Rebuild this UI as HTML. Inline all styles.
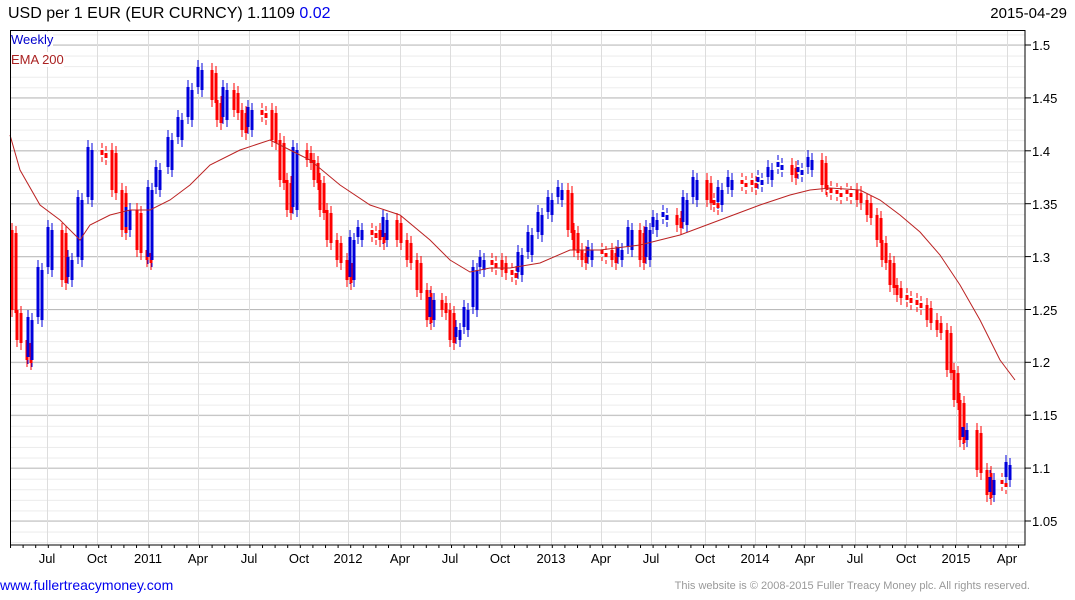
<!DOCTYPE html><html><head><style>
body{margin:0;background:#fff;width:1075px;height:600px;overflow:hidden;font-family:"Liberation Sans",sans-serif;position:relative}
.t{position:absolute;white-space:nowrap}
</style></head><body>
<svg width="1075" height="600" style="position:absolute;left:0;top:0" font-family="Liberation Sans" font-size="13">
<defs>
<pattern id="mn" patternUnits="userSpaceOnUse" x="0" y="45" width="1075" height="10.578"><line x1="0" x2="1075" y1="0.5" y2="0.5" stroke="#ebebeb"/></pattern>
<pattern id="mt" patternUnits="userSpaceOnUse" x="0" y="45" width="10" height="10.578"><line x1="0" x2="3" y1="0.5" y2="0.5" stroke="#000"/></pattern>
<pattern id="bt" patternUnits="userSpaceOnUse" x="10" y="0" width="12.6" height="10"><line x1="0.5" x2="0.5" y1="0" y2="10" stroke="#000"/></pattern>
<path id="rd" fill="none" d="M12 230V310M17 310V340M27 340V360M62 230V280M102 150V155M112 150V190M122 190V230M137 210V250M147 250V260M212 70V100M217 100V120M234 90V110M242 110V130M262 110V115M272 110V140M280 140V180M287 180V210M307 150V160M314 160V180M320 180V210M327 210V240M337 240V260M347 260V280M372 230V235M380 230V240M397 220V240M407 240V260M417 260V290M427 290V320M442 300V310M450 310V340M492 260V265M502 260V270M512 270V275M568 190V230M574 230V250M582 250V260M602 250V254M612 250V260M640 230V260M677 215V225M707 180V200M714 200V205M742 180V184M752 180V185M792 165V175M822 160V185M827 185V190M837 190V194M847 190V194M857 190V200M867 200V215M877 215V240M882 240V260M890 260V285M897 285V295M907 295V300M917 300V305M927 305V320M937 320V330M947 330V370M954 370V400M960 400V440M977 430V470M987 470V495M1002 480V484"/>
<path id="bl" fill="none" d="M32 320V360M42 270V320M52 230V270M72 260V280M82 200V260M92 150V200M130 210V230M152 190V260M160 170V190M172 140V170M182 120V140M192 90V120M202 70V90M227 90V120M252 110V130M297 150V210M354 240V280M362 230V240M387 220V240M434 300V320M460 330V340M468 310V330M477 270V310M484 260V270M522 255V275M532 235V255M542 215V235M552 200V215M562 190V200M592 250V260M622 250V260M632 230V250M650 230V260M657 220V230M667 215V220M687 200V225M697 180V200M722 190V205M732 180V190M762 180V185M772 170V180M782 165V170M802 170V175M812 160V170M967 430V440M994 480V495M1010 465V480"/>
</defs>
<rect x="10" y="30" width="1015" height="515" fill="url(#mn)"/>
<rect x="1025" y="30" width="3" height="515" fill="url(#mt)"/>
<rect x="10" y="545" width="1015" height="3" fill="url(#bt)"/>
<g stroke="#bbb">
<line x1="10" x2="1025" y1="45" y2="45"/><line x1="10" x2="1025" y1="97.9" y2="97.9"/><line x1="10" x2="1025" y1="150.8" y2="150.8"/><line x1="10" x2="1025" y1="203.7" y2="203.7"/><line x1="10" x2="1025" y1="256.6" y2="256.6"/><line x1="10" x2="1025" y1="309.5" y2="309.5"/><line x1="10" x2="1025" y1="362.3" y2="362.3"/><line x1="10" x2="1025" y1="415.2" y2="415.2"/><line x1="10" x2="1025" y1="468.1" y2="468.1"/><line x1="10" x2="1025" y1="521" y2="521"/>
</g>
<g stroke="#000">
<line x1="1025" x2="1031" y1="45" y2="45"/><line x1="1025" x2="1031" y1="97.9" y2="97.9"/><line x1="1025" x2="1031" y1="150.8" y2="150.8"/><line x1="1025" x2="1031" y1="203.7" y2="203.7"/><line x1="1025" x2="1031" y1="256.6" y2="256.6"/><line x1="1025" x2="1031" y1="309.5" y2="309.5"/><line x1="1025" x2="1031" y1="362.3" y2="362.3"/><line x1="1025" x2="1031" y1="415.2" y2="415.2"/><line x1="1025" x2="1031" y1="468.1" y2="468.1"/><line x1="1025" x2="1031" y1="521" y2="521"/>
</g>
<g>
<text x="1032" y="50">1.5</text><text x="1032" y="103">1.45</text><text x="1032" y="156">1.4</text><text x="1032" y="209">1.35</text><text x="1032" y="262">1.3</text><text x="1032" y="315">1.25</text><text x="1032" y="367">1.2</text><text x="1032" y="420">1.15</text><text x="1032" y="473">1.1</text><text x="1032" y="526">1.05</text>
</g>
<g stroke="#ddd">
<line x1="47.5" x2="47.5" y1="30" y2="545"/><line x1="97.5" x2="97.5" y1="30" y2="545"/><line x1="148.5" x2="148.5" y1="30" y2="545"/><line x1="198.5" x2="198.5" y1="30" y2="545"/><line x1="249.5" x2="249.5" y1="30" y2="545"/><line x1="299.5" x2="299.5" y1="30" y2="545"/><line x1="348.5" x2="348.5" y1="30" y2="545"/><line x1="400.5" x2="400.5" y1="30" y2="545"/><line x1="450.5" x2="450.5" y1="30" y2="545"/><line x1="500.5" x2="500.5" y1="30" y2="545"/><line x1="551.5" x2="551.5" y1="30" y2="545"/><line x1="601.5" x2="601.5" y1="30" y2="545"/><line x1="651.5" x2="651.5" y1="30" y2="545"/><line x1="705.5" x2="705.5" y1="30" y2="545"/><line x1="755.5" x2="755.5" y1="30" y2="545"/><line x1="805.5" x2="805.5" y1="30" y2="545"/><line x1="855.5" x2="855.5" y1="30" y2="545"/><line x1="906.5" x2="906.5" y1="30" y2="545"/><line x1="956.5" x2="956.5" y1="30" y2="545"/><line x1="1007.5" x2="1007.5" y1="30" y2="545"/>
</g>
<g text-anchor="middle">
<text x="47" y="563">Jul</text><text x="97" y="563">Oct</text><text x="148" y="563">2011</text><text x="198" y="563">Apr</text><text x="249" y="563">Jul</text><text x="299" y="563">Oct</text><text x="348" y="563">2012</text><text x="400" y="563">Apr</text><text x="450" y="563">Jul</text><text x="500" y="563">Oct</text><text x="551" y="563">2013</text><text x="601" y="563">Apr</text><text x="651" y="563">Jul</text><text x="705" y="563">Oct</text><text x="755" y="563">2014</text><text x="805" y="563">Apr</text><text x="855" y="563">Jul</text><text x="906" y="563">Oct</text><text x="956" y="563">2015</text><text x="1007" y="563">Apr</text>
</g>
<g stroke="#ff0000" stroke-width="1">
<use href="#rd" transform="translate(0,-7)"/><use href="#rd" transform="translate(0,7)"/>
<use href="#rd" transform="translate(4,-4)"/><use href="#rd" transform="translate(4,10)"/>
</g>
<g stroke="#0000dd" stroke-width="1">
<use href="#bl" transform="translate(0,-7)"/><use href="#bl" transform="translate(0,7)"/>
<use href="#bl" transform="translate(-4,-10)"/><use href="#bl" transform="translate(-4,4)"/>
</g>
<g stroke="#ff0000" stroke-width="3"><use href="#rd"/><use href="#rd" transform="translate(4,3)"/></g>
<g stroke="#0000dd" stroke-width="3"><use href="#bl"/><use href="#bl" transform="translate(-4,-3)"/></g>
<path fill="none" stroke="#bb2222" d="M10 135 20 170 40 205 60 220 80 240 90 225 110 215 130 210 150 210 170 200 190 185 210 165 240 150 270 140 290 150 310 160 340 185 370 205 400 215 430 240 450 260 470 272 490 268 510 268 540 263 570 250 600 250 640 245 680 235 720 220 760 205 790 195 810 190 830 188 860 190 880 200 900 215 920 232 940 255 960 285 980 320 1000 360 1015 380"/>
<rect x="10.5" y="30.5" width="1014.5" height="514.5" fill="none" stroke="#000"/>
</svg>
<div class="t" style="left:8px;top:5px;font-size:16px;color:#000">USD per 1 EUR (EUR CURNCY) 1.1109 <span style="color:#0000ee">0.02</span></div>
<div class="t" style="right:8px;top:5px;font-size:15px;color:#000">2015-04-29</div>
<div class="t" style="left:11px;top:32px;font-size:13px;color:#0000cc;background:#fff">Weekly</div>
<div class="t" style="left:11px;top:52px;font-size:13px;color:#aa2222;background:#fff">EMA 200</div>
<div class="t" style="left:0;top:577px;font-size:14px;color:#0000ee">www.fullertreacymoney.com</div>
<div class="t" style="right:45px;top:580px;font-size:11px;color:#999">This website is © 2008-2015 Fuller Treacy Money plc. All rights reserved.</div>
</body></html>
